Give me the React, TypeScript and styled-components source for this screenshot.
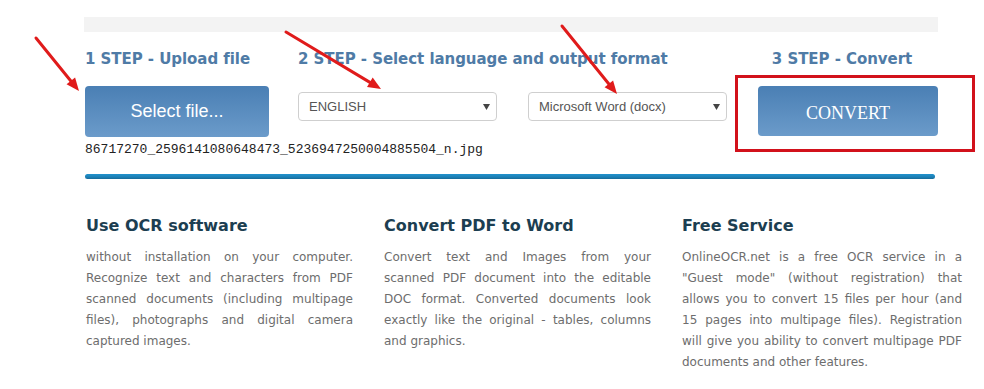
import React from "react";
import styled, { createGlobalStyle } from "styled-components";

const Global = createGlobalStyle`
  html, body { margin: 0; padding: 0; background: #fff; }
  body { width: 984px; height: 389px; overflow: hidden; }
`;

const Page = styled.div`
  position: relative;
  width: 984px;
  height: 389px;
  padding: 17px 0 0 84px;
  box-sizing: border-box;
  font-family: "DejaVu Sans", Verdana, sans-serif;
`;

const TopBar = styled.div`
  width: 854px;
  height: 15px;
  background: #f3f3f3;
`;

const Steps = styled.div`
  display: flex;
  margin-top: 17px;
  padding-left: 1px;
`;

const Step = styled.div<{ $w: number; $mr?: number; $center?: boolean }>`
  position: relative;
  width: ${(p) => p.$w}px;
  margin-right: ${(p) => p.$mr ?? 0}px;
  display: flex;
  flex-direction: column;
  align-items: ${(p) => (p.$center ? "center" : "flex-start")};
`;

const StepTitle = styled.div<{ $shift?: number }>`
  font-size: 15px;
  font-weight: bold;
  line-height: 20px;
  color: #4f7ba6;
  white-space: nowrap;
  letter-spacing: -0.05px;
  margin-left: ${(p) => p.$shift ?? 0}px;
`;

const BlueButton = styled.div<{ $w: number; $h: number; $serif?: boolean }>`
  width: ${(p) => p.$w}px;
  height: ${(p) => p.$h}px;
  margin-top: 17px;
  border-radius: 4px;
  background: linear-gradient(to bottom, #4a7fb4 0%, #6b9bca 100%);
  color: #fff;
  display: flex;
  align-items: center;
  justify-content: center;
  font-family: ${(p) =>
    p.$serif ? '"Liberation Serif", "Times New Roman", serif' : '"Liberation Sans", Arial, sans-serif'};
  font-size: 18px;
  padding-top: ${(p) => (p.$serif ? 4 : 0)}px;
  padding-bottom: ${(p) => (p.$serif ? 0 : 1)}px;
  box-sizing: border-box;
`;

const FileName = styled.div`
  margin-top: 5px;
  font-family: "Liberation Mono", "Courier New", monospace;
  font-size: 13px;
  line-height: 16px;
  color: #222;
  white-space: nowrap;
`;

const SelectRow = styled.div`
  display: flex;
  gap: 31px;
  margin-top: 23px;
`;

const SelectBox = styled.div`
  width: 199px;
  height: 29px;
  box-sizing: border-box;
  border: 1px solid #cfcfcf;
  border-radius: 4px;
  background: #fff;
  display: flex;
  align-items: center;
  justify-content: space-between;
  padding: 0 4px 0 10px;
  font-family: "Liberation Sans", Arial, sans-serif;
  font-size: 13px;
  color: #555;
`;

const Caret = styled.svg`
  width: 7px;
  height: 6px;
  margin-right: 2px;
`;

const Highlight = styled.div`
  position: absolute;
  left: -23px;
  top: 26px;
  width: 240px;
  height: 77px;
  border: 3px solid #d2111b;
  box-sizing: border-box;
  pointer-events: none;
`;

const Rule = styled.div`
  width: 850px;
  height: 5px;
  margin: 16px 0 0 1px;
  border-radius: 3px;
  background: linear-gradient(to bottom, #2192cc 0%, #1c80b6 60%, #176a98 100%);
`;

const Columns = styled.div`
  display: grid;
  grid-template-columns: 267px 267px 280px;
  column-gap: 31px;
  margin: 36px 0 0 2px;
`;

const ColTitle = styled.div`
  font-size: 16px;
  font-weight: bold;
  line-height: 22px;
  color: #1c3e51;
  white-space: nowrap;
`;

const ColText = styled.p`
  margin: 10px 0 0;
  font-size: 12px;
  line-height: 21px;
  color: #6d6d6d;
`;

const Line = styled.span<{ $last?: boolean }>`
  display: block;
  white-space: nowrap;
  text-align: ${(p) => (p.$last ? "left" : "justify")};
  text-align-last: ${(p) => (p.$last ? "left" : "justify")};
`;

const Arrows = styled.svg`
  position: absolute;
  left: 0;
  top: 0;
  width: 984px;
  height: 389px;
  pointer-events: none;
`;

const Arrow = ({ x1, y1, x2, y2 }: { x1: number; y1: number; x2: number; y2: number }) => {
  const dx = x2 - x1;
  const dy = y2 - y1;
  const len = Math.hypot(dx, dy);
  const ux = dx / len;
  const uy = dy / len;
  const hl = 13;
  const hw = 5.5;
  const bx = x2 - ux * hl;
  const by = y2 - uy * hl;
  const pts = `${x2},${y2} ${bx - uy * hw},${by + ux * hw} ${bx + uy * hw},${by - ux * hw}`;
  return (
    <g>
      <line x1={x1} y1={y1} x2={bx + ux * 2} y2={by + uy * 2} stroke="#e01b1b" strokeWidth={3} strokeLinecap="round" />
      <polygon points={pts} fill="#e01b1b" />
    </g>
  );
};

const CaretIcon = () => (
  <Caret viewBox="0 0 7 6">
    <polygon points="0,0 7,0 3.5,6" fill="#444" />
  </Caret>
);

const columns = [
  {
    title: "Use OCR software",
    lines: [
      "without installation on your computer.",
      "Recognize text and characters from PDF",
      "scanned documents (including multipage",
      "files), photographs and digital camera",
      "captured images.",
    ],
  },
  {
    title: "Convert PDF to Word",
    lines: [
      "Convert text and Images from your",
      "scanned PDF document into the editable",
      "DOC format. Converted documents look",
      "exactly like the original - tables, columns",
      "and graphics.",
    ],
  },
  {
    title: "Free Service",
    lines: [
      "OnlineOCR.net is a free OCR service in a",
      "\"Guest mode\" (without registration) that",
      "allows you to convert 15 files per hour (and",
      "15 pages into multipage files). Registration",
      "will give you ability to convert multipage PDF",
      "documents and other features.",
    ],
  },
];

export default function App() {
  return (
    <>
      <Global />
      <Page>
        <TopBar />
        <Steps>
          <Step $w={184} $mr={29}>
            <StepTitle>1 STEP - Upload file</StepTitle>
            <BlueButton $w={184} $h={51}>Select file...</BlueButton>
            <FileName>86717270_2596141080648473_5236947250004885504_n.jpg</FileName>
          </Step>
          <Step $w={429} $mr={31}>
            <StepTitle>2 STEP - Select language and output format</StepTitle>
            <SelectRow>
              <SelectBox>
                <span>ENGLISH</span>
                <CaretIcon />
              </SelectBox>
              <SelectBox>
                <span>Microsoft Word (docx)</span>
                <CaretIcon />
              </SelectBox>
            </SelectRow>
          </Step>
          <Step $w={180} $center>
            <StepTitle $shift={-12}>3 STEP - Convert</StepTitle>
            <BlueButton $w={180} $h={50} $serif>CONVERT</BlueButton>
            <Highlight />
          </Step>
        </Steps>
        <Rule />
        <Columns>
          {columns.map((c) => (
            <div key={c.title}>
              <ColTitle>{c.title}</ColTitle>
              <ColText>
                {c.lines.map((l, i) => (
                  <Line key={i} $last={i === c.lines.length - 1}>
                    {l}
                  </Line>
                ))}
              </ColText>
            </div>
          ))}
        </Columns>
        <Arrows viewBox="0 0 984 389">
          <Arrow x1={36} y1={38} x2={79} y2={91} />
          <Arrow x1={286} y1={32} x2={381} y2={89} />
          <Arrow x1={562} y1={26} x2={617} y2={94} />
        </Arrows>
      </Page>
    </>
  );
}
